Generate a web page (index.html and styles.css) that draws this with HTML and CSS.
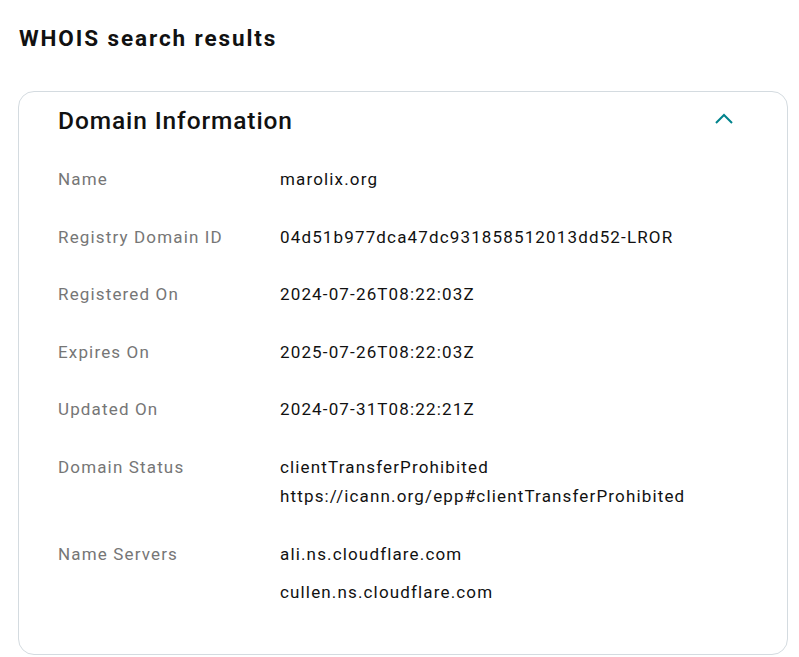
FILE: index.html
```html
<!DOCTYPE html>
<html>
<head>
<meta charset="utf-8">
<link rel="stylesheet" href="styles.css">
</head>
<body>
<main class="page">
  <h1 class="title">WHOIS search results</h1>
  <section class="card">
    <header class="card-head">
      <h2 class="card-title">Domain Information</h2>
      <svg class="chevron" width="20" height="12" viewBox="0 0 20 12"><path d="M2 10 L10 2 L18 10" fill="none" stroke="#00838c" stroke-width="2"/></svg>
    </header>
    <dl class="rows">
      <div class="row"><dt>Name</dt><dd><div>marolix.org</div></dd></div>
      <div class="row"><dt>Registry Domain ID</dt><dd><div>04d51b977dca47dc931858512013dd52-LROR</div></dd></div>
      <div class="row"><dt>Registered On</dt><dd><div>2024-07-26T08:22:03Z</div></dd></div>
      <div class="row"><dt>Expires On</dt><dd><div>2025-07-26T08:22:03Z</div></dd></div>
      <div class="row"><dt>Updated On</dt><dd><div>2024-07-31T08:22:21Z</div></dd></div>
      <div class="row"><dt>Domain Status</dt><dd class="tight"><div>clientTransferProhibited</div><div>https://icann.org/epp#clientTransferProhibited</div></dd></div>
      <div class="row"><dt>Name Servers</dt><dd class="spaced"><div>ali.ns.cloudflare.com</div><div>cullen.ns.cloudflare.com</div></dd></div>
    </dl>
  </section>
</main>
</body>
</html>
```
FILE: styles.css
```css
* { box-sizing: border-box; }
body { margin: 0; background: #fff; color: #111; font-family: "Roboto", "Liberation Sans", sans-serif; }
.page { padding: 23px 11px 4px 18px; }
.title { margin: 0 0 38px 1px; font-size: 22.5px; font-weight: 700; line-height: 30px; letter-spacing: 1.9px; color: #111; }
.card { border: 1px solid #d4dbe0; border-radius: 16px; padding: 10px 40px 50px 39px; }
.card-head { display: flex; align-items: center; justify-content: space-between; height: 38px; }
.card-title { margin: 0; font-size: 24.5px; font-weight: 500; line-height: 38px; letter-spacing: 0.9px; color: #111; }
.chevron { margin-right: 13px; margin-top: -4px; }
.rows { margin: 27px 0 0; padding: 0; display: flex; flex-direction: column; gap: 33.6px; }
.row { display: flex; }
dt { width: 222px; flex: none; color: #767676; font-size: 17px; line-height: 24px; letter-spacing: 1.15px; }
dd { margin: 0; font-size: 17px; line-height: 24px; letter-spacing: 1.15px; color: #111; display: flex; flex-direction: column; }
dd.tight { gap: 5px; }
dd.spaced { gap: 14px; }
```
